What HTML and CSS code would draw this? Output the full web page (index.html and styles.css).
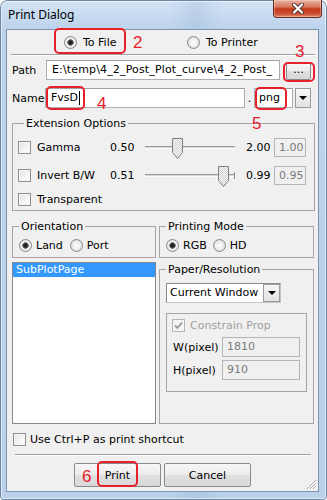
FILE: index.html
```html
<!DOCTYPE html>
<html lang="en">
<head>
  <meta charset="UTF-8" />
  <title>Print Dialog</title>
  <link rel="stylesheet" href="styles.css">
</head>
<body>
  <div class="window">
    <div class="titlebar">
      <span class="title">Print Dialog</span>
      <span class="close">
        <svg width="12" height="11" viewBox="0 0 12 11">
          <path d="M2 1.5l8 8M10 1.5l-8 8" stroke="#4b3330" stroke-width="4" stroke-linecap="round"/>
          <path d="M2 1.5l8 8M10 1.5l-8 8" stroke="#fff" stroke-width="2.2" stroke-linecap="round"/>
        </svg>
      </span>
    </div>

    <div class="client">
      <div class="dest-row">
        <label class="radio-item first"><span class="radio on"></span>To File</label>
        <label class="radio-item"><span class="radio"></span>To Printer</label>
      </div>
      <div class="sep"></div>

      <div class="form-row">
        <span class="lbl path-lbl">Path</span>
        <div class="field path-field">E:\temp\4_2_Post_Plot_curve\4_2_Post_</div>
        <button class="btn browse">...</button>
      </div>

      <div class="form-row name-row">
        <span class="lbl name-lbl">Name</span>
        <div class="field name-field">FvsD<span class="caret"></span></div>
        <span class="dot">.</span>
        <div class="field ext-field">png</div>
        <span class="drop-btn"><i class="tri"></i></span>
      </div>

      <div class="group ext-group">
        <div class="group-title">Extension Options</div>
        <div class="opt-row first-opt">
          <label class="check-item"><span class="check"></span>Gamma</label>
          <span class="num">0.50</span>
          <div class="slider">
            <span class="track"></span>
            <svg class="thumb" style="left:27px" width="11" height="21" viewBox="0 0 11 21">
              <defs>
                <pattern id="dots" width="2" height="2" patternUnits="userSpaceOnUse">
                  <rect width="2" height="2" fill="#f6f6f6"/>
                  <rect width="1" height="1" fill="#d2d2d2"/>
                  <rect x="1" y="1" width="1" height="1" fill="#d2d2d2"/>
                </pattern>
              </defs>
              <path d="M.5 .5h10v14l-5 6-5-6z" fill="url(#dots)" stroke="#808080"/>
            </svg>
          </div>
          <span class="num max">2.00</span>
          <div class="field off small-field">1.00</div>
        </div>
        <div class="opt-row second-opt">
          <label class="check-item"><span class="check"></span>Invert B/W</label>
          <span class="num">0.51</span>
          <div class="slider">
            <span class="track"></span>
            <span class="tick"></span>
            <svg class="thumb" style="left:73px" width="11" height="21" viewBox="0 0 11 21">
              <path d="M.5 .5h10v14l-5 6-5-6z" fill="url(#dots)" stroke="#808080"/>
            </svg>
          </div>
          <span class="num max">0.99</span>
          <div class="field off small-field">0.95</div>
        </div>
        <div class="opt-row third-opt">
          <label class="check-item"><span class="check"></span>Transparent</label>
        </div>
      </div>

      <div class="lower">
        <div class="group">
          <div class="group-title">Orientation</div>
          <div class="radio-row orient-row">
            <label class="radio-item"><span class="radio on"></span>Land</label>
            <label class="radio-item"><span class="radio"></span>Port</label>
          </div>
        </div>
        <div class="group">
          <div class="group-title">Printing Mode</div>
          <div class="radio-row mode-row">
            <label class="radio-item"><span class="radio on"></span>RGB</label>
            <label class="radio-item"><span class="radio"></span>HD</label>
          </div>
        </div>
        <div class="listbox">
          <div class="list-item selected">SubPlotPage</div>
        </div>
        <div class="group paper">
          <div class="group-title">Paper/Resolution</div>
          <div class="combo">
            <span class="combo-text">Current Window</span>
            <span class="combo-btn"><i class="tri"></i></span>
          </div>
          <div class="inner-box">
            <label class="check-item constrain">
              <span class="check disabled">
                <svg width="11" height="11" viewBox="0 0 11 11"><path d="M2 5.5l2.5 2.5 4.5-5.5" fill="none" stroke="#9a9a9a" stroke-width="1.8"/></svg>
              </span>Constrain Prop
            </label>
            <div class="px-row first-px">
              <span class="px-lbl">W(pixel)</span>
              <div class="field off px-field">1810</div>
            </div>
            <div class="px-row">
              <span class="px-lbl">H(pixel)</span>
              <div class="field off px-field">910</div>
            </div>
          </div>
        </div>
      </div>

      <label class="check-item shortcut"><span class="check"></span>Use Ctrl+P as print shortcut</label>
      <div class="sep bottom-sep"></div>
      <div class="buttons">
        <button class="btn push">Print</button>
        <button class="btn push">Cancel</button>
      </div>

      <svg class="grip" width="12" height="12" viewBox="0 0 12 12">
        <path d="M11 2L2 11M11 5L5 11M11 8L8 11" stroke="#a8a8a8" stroke-width="1"/>
        <path d="M11.7 2.7L2.7 11.7M11.7 5.7L5.7 11.7M11.7 8.7L8.7 11.7" stroke="#fff" stroke-width="1"/>
      </svg>
    </div>

    <!-- annotations drawn on top of the screenshot -->
    <span class="mark box-file"></span>
    <span class="note n2">2</span>
    <span class="note n3">3</span>
    <span class="mark box-browse"></span>
    <span class="mark box-name"></span>
    <span class="note n4">4</span>
    <span class="mark box-ext"></span>
    <span class="note n5">5</span>
    <span class="mark box-print"></span>
    <span class="note n6">6</span>
  </div>
</body>
</html>
```

FILE: styles.css
```css
* {
  box-sizing: border-box;
}

body {
  margin: 0;
  font-family: "DejaVu Sans", sans-serif;
  font-size: 11px;
  color: #000;
  background: #fff;
}

.window {
  position: relative;
  width: 327px;
  height: 500px;
  display: flex;
  flex-direction: column;
  background:
    linear-gradient(90deg, transparent 52%, rgba(120,150,190,0.18) 60%, transparent 68%),
    linear-gradient(to bottom, #d3e3f5 0, #bcd3ec 30px, #b9d1ea 100%);
  border-radius: 7px 7px 4px 4px;
  box-shadow: inset 0 0 0 1px #6f86a2, inset 0 0 0 2px rgba(255,255,255,0.55);
}

.titlebar {
  flex: none;
  height: 29px;
  display: flex;
  justify-content: space-between;
  padding: 0 5px 0 8px;
}

.title {
  font-family: "Noto Sans", sans-serif;
  font-size: 12px;
  line-height: 16px;
  padding-top: 7px;
}

.close {
  width: 49px;
  height: 18px;
  display: flex;
  align-items: center;
  justify-content: center;
  border: 1px solid #6a2a22;
  border-top: 0;
  border-radius: 0 0 4px 4px;
  background: linear-gradient(#eab0a0, #d77a60 40%, #c4391e 52%, #c84a2d 78%, #e3866a);
  box-shadow: inset 0 0 0 1px rgba(255,255,255,0.3);
}

.client {
  position: relative;
  flex: 1;
  margin: 0 8px 8px 6px;
  background: #f0f0f0;
  border: 1px solid #7f93ac;
}

/* radio + checkbox */
.radio-item,
.check-item {
  display: flex;
  align-items: center;
  white-space: nowrap;
}

.radio-item {
  gap: 4px;
}

.radio {
  flex: none;
  width: 13px;
  height: 13px;
  border-radius: 50%;
  border: 1px solid #8a8a8a;
  background: radial-gradient(circle, #fdfdfd 0, #f2f2f2 3px, #d9d9d9 6px);
}

.radio.on {
  background: radial-gradient(circle, #111 0, #333 2px, #777 3px, #f8f8f8 3.5px, #dcdcdc 6px);
}

.check-item {
  gap: 6px;
}

.check {
  flex: none;
  width: 13px;
  height: 13px;
  border: 1px solid #8e8f8f;
  background: linear-gradient(135deg, #e6e6e6, #fff);
  box-shadow: inset 0 0 0 1px #f6f6f6;
  display: flex;
  align-items: center;
  justify-content: center;
}

.check.disabled {
  border-color: #b5b5b5;
  background: #f4f4f4;
}

/* top part */
.dest-row {
  height: 24px;
  display: flex;
  align-items: center;
  padding: 1px 0 0 57px;
}

.dest-row .radio-item {
  gap: 6px;
}

.dest-row .first {
  width: 123px;
}

.sep {
  margin: 0 3px 0 4px;
  border-top: 1px solid #a0a0a0;
  border-bottom: 1px solid #fff;
}

.form-row {
  display: flex;
  align-items: center;
  height: 20px;
  margin-top: 4px;
  padding-left: 5px;
}

.name-row {
  margin-top: 8px;
}

.path-lbl {
  width: 34px;
}

.name-lbl {
  width: 33px;
}

.field {
  flex: none;
  height: 20px;
  line-height: 18px;
  padding: 0 4px;
  background: #fff;
  border: 1px solid #abadb3;
  border-top-color: #9ea1a8;
  white-space: nowrap;
  overflow: hidden;
}

.field.off {
  background: #f0f0f0;
  color: #7a7a7a;
  border-color: #b3b6b9;
}

.path-field {
  width: 234px;
  padding-left: 5px;
  letter-spacing: 0.15px;
}

.name-field {
  width: 200px;
  padding-left: 5px;
  display: flex;
  align-items: center;
}

.caret {
  width: 1px;
  height: 14px;
  margin-left: 1px;
  background: #000;
}

.dot {
  width: 9px;
  text-align: center;
}

.ext-field {
  width: 39px;
  padding-left: 4px;
}

.btn {
  font: inherit;
  color: #000;
  padding: 0;
  border: 1px solid #8a8a8a;
  border-radius: 2px;
  background: linear-gradient(#f7f7f7, #ececec 50%, #e0e0e0 51%, #d8d8d8);
}

.browse {
  align-self: flex-start;
  width: 25px;
  height: 18px;
  margin: 2px 0 0 6px;
  line-height: 14px;
  padding-bottom: 3px;
}

.drop-btn,
.combo-btn {
  display: flex;
  align-items: center;
  justify-content: center;
  border: 1px solid #9a9a9a;
  background: linear-gradient(#f6f6f6, #e2e2e2);
}

.drop-btn {
  width: 16px;
  height: 20px;
  margin-left: 2px;
}

.tri {
  width: 0;
  height: 0;
  border-left: 4px solid transparent;
  border-right: 4px solid transparent;
  border-top: 4px solid #000;
}

/* group boxes */
.group {
  border: 1px solid #a5a5a5;
}

.group-title {
  display: table;
  margin: -7px 0 0 6px;
  padding: 0 2px;
  line-height: 13px;
  background: #f0f0f0;
  white-space: nowrap;
}

.ext-group {
  margin: 15px 3px 0 5px;
  padding: 0 0 1px 5px;
}

.opt-row {
  display: flex;
  align-items: center;
  height: 20px;
}

.first-opt {
  margin-top: 7px;
}

.second-opt {
  margin-top: 8px;
}

.third-opt {
  margin-top: 4px;
}

.opt-row .check-item {
  width: 92px;
}

.num {
  width: 35px;
}

.num.max {
  width: 28px;
  margin-left: 11px;
}

.slider {
  position: relative;
  width: 90px;
  height: 20px;
  display: flex;
  align-items: center;
}

.track {
  flex: 1;
  height: 3px;
  border-top: 1px solid #9a9a9a;
  border-bottom: 1px solid #fdfdfd;
  background: #d6d6d6;
}

.tick {
  width: 1px;
  height: 7px;
  background: #8a8a8a;
}

.thumb {
  position: absolute;
  top: 1px;
}

.small-field {
  width: 32px;
  height: 19px;
  line-height: 17px;
}

/* lower part */
.lower {
  display: grid;
  grid-template-columns: 144px 155px;
  grid-template-rows: auto 162px;
  column-gap: 3px;
  row-gap: 4px;
  margin: 15px 0 0 5px;
}

.radio-row {
  display: flex;
  align-items: center;
  height: 16px;
  margin: 4px 0 4px;
  padding-left: 6px;
}

.orient-row {
  gap: 7px;
}

.mode-row {
  gap: 6px;
}

.listbox {
  background: #fff;
  border: 1px solid #828790;
}

.list-item {
  height: 14px;
  line-height: 14px;
  padding-left: 3px;
}

.list-item.selected {
  background: #3399ff;
  color: #fff;
}

.paper {
  margin-top: 7px;
}

.combo {
  display: flex;
  width: 115px;
  height: 20px;
  margin: 7px 0 0 6px;
  background: #fff;
  border: 1px solid #8c8c8c;
  border-right-color: #c4c4c4;
  border-bottom-color: #c4c4c4;
}

.combo-text {
  flex: 1;
  line-height: 18px;
  padding-left: 3px;
  white-space: nowrap;
}

.combo-btn {
  width: 17px;
}

.inner-box {
  width: 141px;
  margin: 10px 0 0 6px;
  padding-bottom: 11px;
  border: 1px solid #a5a5a5;
}

.constrain {
  height: 16px;
  margin-top: 3px;
  padding-left: 5px;
  gap: 5px;
  color: #a0a0a0;
}

.px-row {
  display: flex;
  align-items: center;
  height: 20px;
  margin-top: 3px;
  padding-left: 6px;
}

.first-px {
  margin-top: 4px;
}

.px-lbl {
  width: 49px;
}

.px-field {
  width: 78px;
}

/* bottom part */
.shortcut {
  height: 13px;
  margin: 9px 0 0 6px;
  gap: 4px;
}

.bottom-sep {
  margin: 8px 7px 0 8px;
}

.buttons {
  display: flex;
  justify-content: center;
  gap: 3px;
  margin-top: 7px;
}

.push {
  width: 87px;
  height: 24px;
}

.grip {
  position: absolute;
  right: 1px;
  bottom: 1px;
}

/* red annotations */
.mark {
  position: absolute;
  border: 2px solid #e8202a;
  border-radius: 5px;
}

.note {
  position: absolute;
  font-family: "Liberation Sans", sans-serif;
  font-size: 17px;
  line-height: 17px;
  color: #e8202a;
}

.box-file { left: 54px; top: 28px; width: 72px; height: 26px; }
.box-browse { left: 283px; top: 62px; width: 32px; height: 20px; }
.box-name { left: 46px; top: 86px; width: 39px; height: 24px; }
.box-ext { left: 255px; top: 87px; width: 32px; height: 23px; }
.box-print { left: 97px; top: 461px; width: 41px; height: 26px; }

.n2 { left: 133px; top: 34px; }
.n3 { left: 295px; top: 43px; }
.n4 { left: 97px; top: 95px; }
.n5 { left: 252px; top: 115px; }
.n6 { left: 82px; top: 468px; }
```
